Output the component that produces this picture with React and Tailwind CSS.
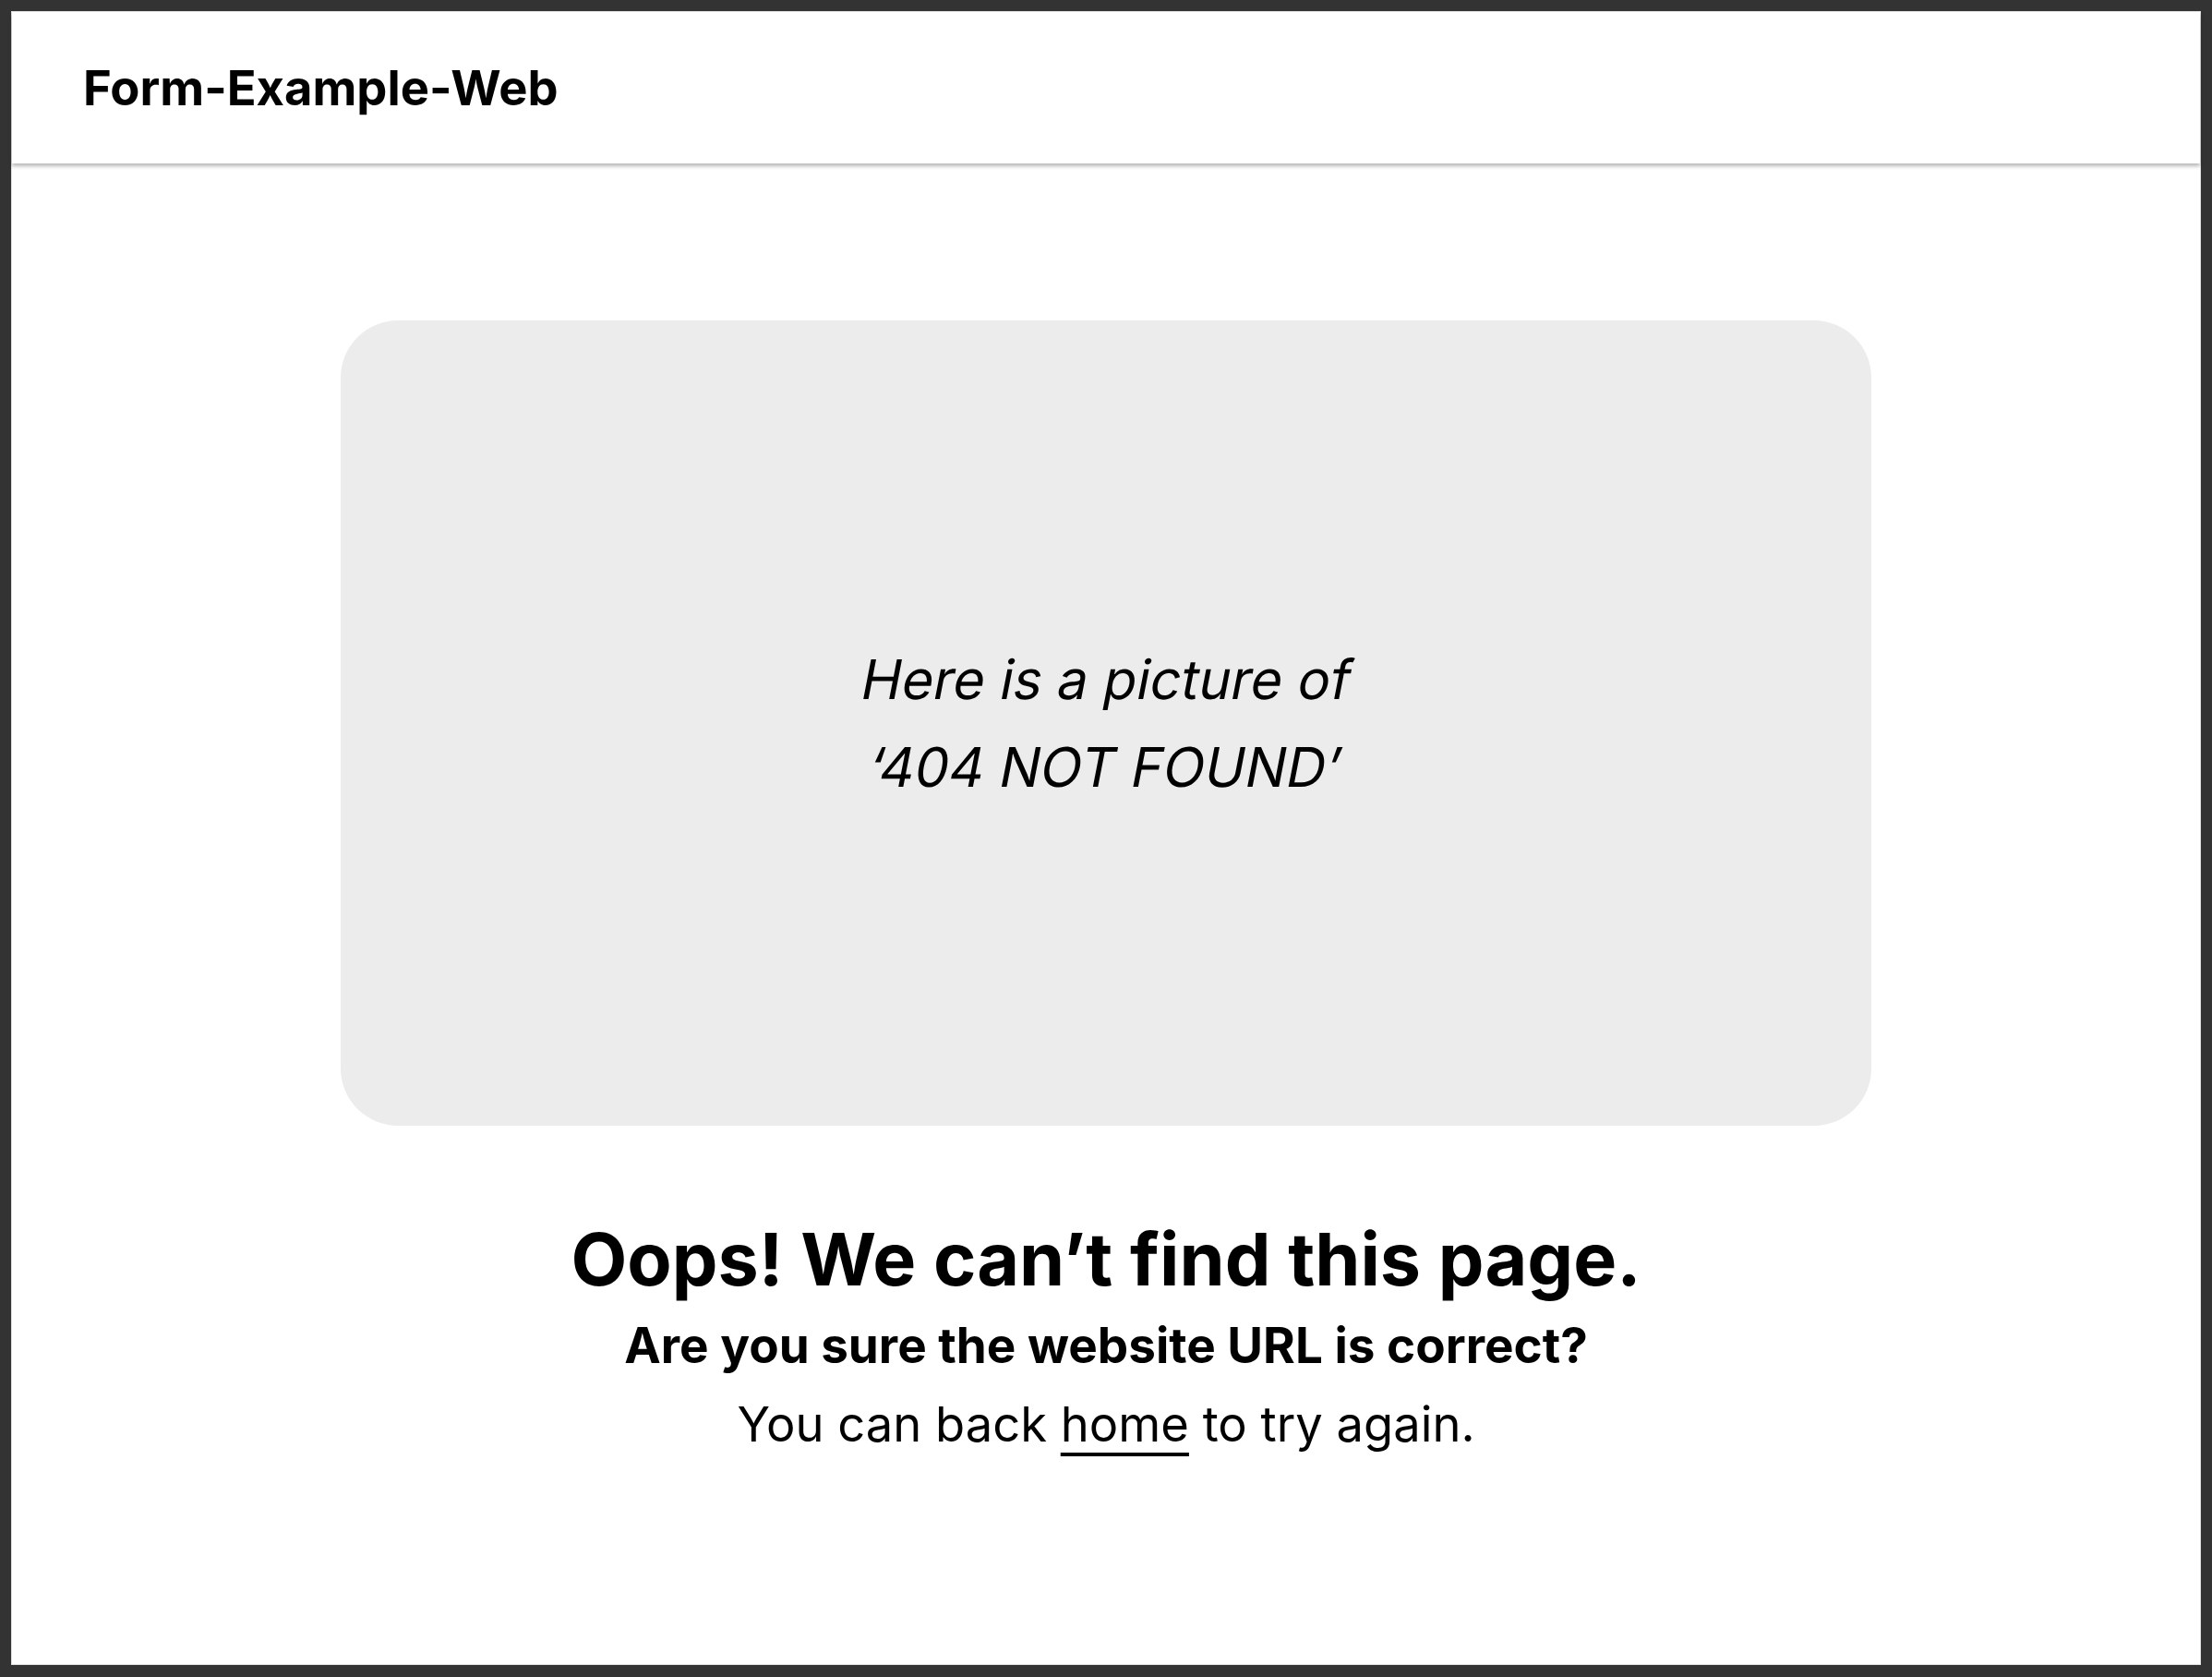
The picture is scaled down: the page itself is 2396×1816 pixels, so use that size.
export default function App() {
    return (
        <div className="min-h-screen bg-[#333333] p-[12px] pb-[13px]" style={{ fontFamily: 'Inter, "Noto Sans", sans-serif' }}>
            <div className="flex h-[1791px] flex-col border border-[#e2e2e2] bg-white">
                {/* Header */}
                <header className="flex h-[164px] shrink-0 items-center px-[77px] shadow-[0_3px_4px_rgba(0,0,0,0.28)]">
                    <h1 className="text-[52.5px] font-bold text-black">Form-Example-Web</h1>
                </header>

                {/* Body */}
                <main className="flex flex-col items-center pt-[170px]">
                    <div className="flex h-[872px] w-[1658px] flex-col items-center justify-center rounded-[62px] bg-[#ececec]">
                        <p className="inline-block -skew-x-[11deg] text-center text-[59px] leading-[95px] text-black">
                            Here is a picture of&nbsp;
                            <br />
                            &nbsp;‘404 NOT FOUND’
                        </p>
                    </div>

                    <h2 className="mt-[97px] text-[79px] font-bold leading-[1.2] text-black">
                        Oops! We can’t find this page.
                    </h2>
                    <p className="mt-[12px] text-[53px] font-bold leading-[1.3] text-black">
                        Are you sure the website URL is correct?
                    </p>
                    <p className="mt-[16px] text-[52.5px] leading-[1.3] text-black">
                        You can back{' '}
                        <a href="#" className="underline decoration-[4px] underline-offset-[12px]">home</a>
                        {' '}to try again.
                    </p>
                </main>
            </div>
        </div>
    );
}
